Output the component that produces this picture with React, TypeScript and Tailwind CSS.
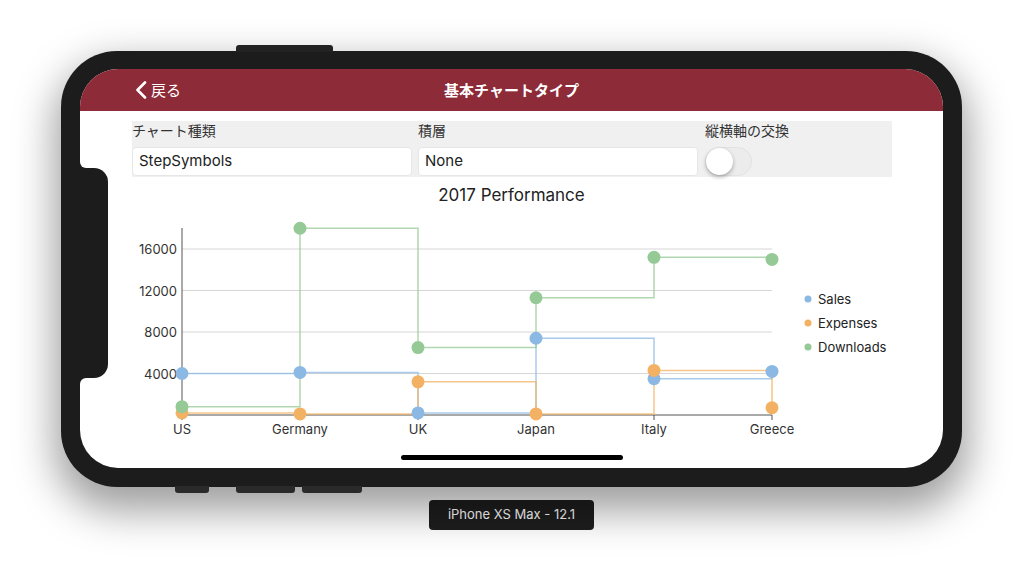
import React from 'react';

const xs = [182, 300, 418, 536, 654, 772];
const countries = ['US', 'Germany', 'UK', 'Japan', 'Italy', 'Greece'];
const yOf = (v: number) => 415 - (v * 41.5) / 4000;

const series = [
  { name: 'Sales', color: '#8cb8e4', data: [4000, 4100, 200, 7400, 3500, 4200] },
  { name: 'Expenses', color: '#f2b163', data: [200, 100, 3200, 100, 4300, 700] },
  { name: 'Downloads', color: '#95c995', data: [800, 18000, 6500, 11300, 15200, 15000] },
];

const stepPath = (data: number[]) => {
  let d = `M ${xs[0]} ${yOf(data[0])}`;
  for (let i = 1; i < data.length; i++) {
    d += ` H ${xs[i]} V ${yOf(data[i])}`;
  }
  return d;
};

const Chart: React.FC = () => {
  const grid = [16000, 12000, 8000, 4000];
  return (
    <svg width={863} height={235} viewBox="80 205 863 235" className="block">
      {/* gridlines */}
      {grid.map((g) => (
        <line key={g} x1={182} x2={772} y1={yOf(g)} y2={yOf(g)} stroke="#d6d6d6" strokeWidth={1} />
      ))}
      {/* axes */}
      <line x1={182} x2={182} y1={228} y2={415} stroke="#555" strokeWidth={1} />
      <line x1={182} x2={772} y1={415} y2={415} stroke="#555" strokeWidth={1} />
      {xs.map((x) => (
        <line key={x} x1={x} x2={x} y1={415} y2={420} stroke="#555" strokeWidth={1} />
      ))}
      {/* y labels */}
      {grid.map((g) => (
        <text key={g} x={177} y={yOf(g)} textAnchor="end" dominantBaseline="central" fontSize={13} fill="#333">
          {g}
        </text>
      ))}
      {/* x labels */}
      {xs.map((x, i) => (
        <text key={x} x={x} y={429} textAnchor="middle" dominantBaseline="central" fontSize={13} fill="#333">
          {countries[i]}
        </text>
      ))}
      {/* series lines */}
      {series.map((s) => (
        <path key={s.name} d={stepPath(s.data)} fill="none" stroke={s.color} strokeOpacity={0.75} strokeWidth={1.5} />
      ))}
      {/* markers */}
      {series.map((s) =>
        s.data.map((v, i) => (
          <circle key={s.name + i} cx={xs[i]} cy={yOf(v)} r={6.5} fill={s.color} />
        ))
      )}
      {/* legend */}
      {series.map((s, i) => (
        <g key={s.name}>
          <circle cx={808} cy={299 + i * 24} r={3.5} fill={s.color} />
          <text x={818} y={299 + i * 24} dominantBaseline="central" fontSize={13} fill="#222">
            {s.name}
          </text>
        </g>
      ))}
    </svg>
  );
};

const App: React.FC = () => {
  return (
    <div className="w-[1024px] h-[577px] bg-white overflow-hidden pt-[51px] pl-[61px] font-['Inter','Noto_Sans_CJK_JP',sans-serif]">
      <div className="w-[901px] flex flex-col">
        {/* Phone body */}
        <div className="relative w-[901px] h-[436px] rounded-[56px] bg-[#1c1c1c] p-[18px_19px_19px_19px] shadow-[0_18px_40px_6px_rgba(0,0,0,0.38)]">
          {/* side buttons */}
          <div className="absolute top-[-6px] left-[175px] w-[97px] h-[7px] rounded-t-[3px] bg-[#222]" />
          <div className="absolute bottom-[-6px] left-[114px] w-[34px] h-[7px] rounded-b-[3px] bg-[#2a2a2a]" />
          <div className="absolute bottom-[-6px] left-[175px] w-[59px] h-[7px] rounded-b-[3px] bg-[#2a2a2a]" />
          <div className="absolute bottom-[-6px] left-[241px] w-[60px] h-[7px] rounded-b-[3px] bg-[#2a2a2a]" />

          {/* Screen */}
          <div className="relative w-[863px] h-[399px] rounded-[38px] bg-white overflow-hidden flex flex-col">
            {/* Notch with small fillets */}
            <div className="absolute left-0 top-[93px] w-[6px] h-[6px] bg-[#1c1c1c]">
              <div className="w-[6px] h-[6px] bg-white rounded-bl-[6px]" />
            </div>
            <div className="absolute left-0 top-[99px] w-[28px] h-[210px] rounded-r-[14px] bg-[#1c1c1c]" />
            <div className="absolute left-0 top-[309px] w-[6px] h-[6px] bg-[#1c1c1c]">
              <div className="w-[6px] h-[6px] bg-white rounded-tl-[6px]" />
            </div>

            {/* Nav bar */}
            <div className="relative h-[42px] shrink-0 bg-[#8e2b38] flex items-center justify-center">
              <div className="absolute left-[55px] top-0 h-[42px] flex items-center gap-[4px] text-white">
                <svg width="12" height="18" viewBox="0 0 12 18">
                  <path d="M10 1.5 L2.5 9 L10 16.5" fill="none" stroke="white" strokeWidth="2.6" strokeLinecap="round" strokeLinejoin="round" />
                </svg>
                <span className="text-[15px] leading-none">戻る</span>
              </div>
              <span className="text-white text-[15px] font-bold leading-none">基本チャートタイプ</span>
            </div>

            {/* Settings panel */}
            <div className="mt-[10px] ml-[52px] w-[760px] h-[56px] bg-[#f0f0f0] grid grid-cols-[280px_280px_1fr] gap-x-[6px]">
              <div className="flex flex-col">
                <div className="h-[26px] text-[14px] leading-[20px] text-[#333]">チャート種類</div>
                <div className="h-[29px] bg-white rounded-[4px] border border-[#e6e6e6] flex items-center px-[6px] text-[15px] text-[#222]">StepSymbols</div>
              </div>
              <div className="flex flex-col">
                <div className="h-[26px] text-[14px] leading-[20px] text-[#333]">積層</div>
                <div className="h-[29px] bg-white rounded-[4px] border border-[#e6e6e6] flex items-center px-[6px] text-[15px] text-[#222]">None</div>
              </div>
              <div className="flex flex-col pl-[1px]">
                <div className="h-[26px] text-[14px] leading-[20px] text-[#333]">縦横軸の交換</div>
                <div className="w-[47px] h-[29px] rounded-full bg-[#ececec] border border-[#e2e2e2] flex items-center">
                  <div className="w-[27px] h-[27px] rounded-full bg-white shadow-[0_2px_4px_rgba(0,0,0,0.3)]" />
                </div>
              </div>
            </div>

            {/* Chart title */}
            <div className="mt-[9px] h-[19px] text-center text-[17px] leading-[19px] text-[#222]">2017 Performance</div>

            <Chart />

            {/* Home indicator */}
            <div className="mt-auto mb-[8px] mx-auto w-[222px] h-[5px] rounded-full bg-black" />
          </div>
        </div>

        {/* Device label */}
        <div className="mt-[13px] mx-auto h-[30px] px-[19px] rounded-[4px] bg-[#1e1e1e] flex items-center text-white text-[13px]">
          iPhone XS Max - 12.1
        </div>
      </div>
    </div>
  );
};

export default App;
